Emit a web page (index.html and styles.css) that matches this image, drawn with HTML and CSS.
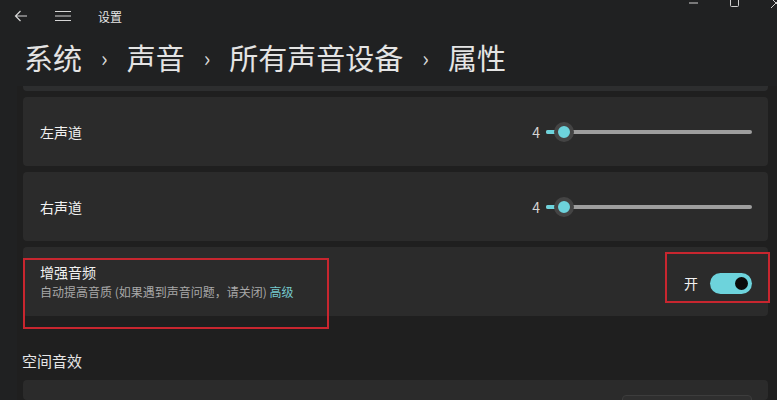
FILE: index.html
```html
<!DOCTYPE html>
<html lang="zh-CN">
<head>
    <meta charset="UTF-8">
    <meta name="viewport" content="width=device-width, initial-scale=1.0">
    <title>设置</title>
    <link rel="stylesheet" href="styles.css">
</head>
<body>
    <header class="titlebar">
        <span class="nav-icon back">
            <svg width="14" height="12" viewBox="0 0 14 12" fill="none" stroke="#d6d6d6" stroke-width="1.2">
                <path d="M13 6H1.5M6.5 1L1.5 6l5 5"/>
            </svg>
        </span>
        <span class="nav-icon menu">
            <svg width="16" height="12" viewBox="0 0 16 12" fill="none" stroke="#d6d6d6" stroke-width="1.2">
                <path d="M0 1.5h16M0 6h16M0 10.5h16"/>
            </svg>
        </span>
        <span class="app-title">设置</span>
        <div class="window-controls">
            <svg width="10" height="10" viewBox="0 0 10 10" fill="none" stroke="#d0d0d0" stroke-width="1"><path d="M0 5h9"/></svg>
            <svg width="10" height="10" viewBox="0 0 10 10" fill="none" stroke="#d0d0d0" stroke-width="1"><rect x="0.5" y="0.5" width="8" height="8" rx="1"/></svg>
            <svg width="10" height="10" viewBox="0 0 10 10" fill="none" stroke="#d0d0d0" stroke-width="1"><path d="M0 0l10 10M10 0L0 10"/></svg>
        </div>
    </header>

    <nav class="breadcrumb">
        <span>系统</span><span class="sep">›</span>
        <span>声音</span><span class="sep">›</span>
        <span>所有声音设备</span><span class="sep">›</span>
        <span>属性</span>
    </nav>

    <main class="content">
        <div class="card partial"></div>

        <div class="card">
            <span class="card-title">左声道</span>
            <div class="slider">
                <span class="slider-value">4</span>
                <div class="track">
                    <div class="fill"></div>
                    <div class="thumb"></div>
                </div>
            </div>
        </div>

        <div class="card">
            <span class="card-title">右声道</span>
            <div class="slider">
                <span class="slider-value">4</span>
                <div class="track">
                    <div class="fill"></div>
                    <div class="thumb"></div>
                </div>
            </div>
        </div>

        <div class="card enhance">
            <div class="card-text">
                <span class="card-title">增强音频</span>
                <span class="card-desc">自动提高音质 (如果遇到声音问题，请关闭) <a class="link">高级</a></span>
            </div>
            <div class="toggle-wrap">
                <span class="toggle-label">开</span>
                <span class="toggle"><span class="knob"></span></span>
            </div>
            <!-- annotation boxes -->
            <div class="mark mark-text"></div>
            <div class="mark mark-toggle"></div>
        </div>

        <h2 class="section-title">空间音效</h2>

        <div class="card last">
            <span class="dropdown"></span>
        </div>
    </main>
</body>
</html>
```

FILE: styles.css
```css
:root {
    --bg: #202122;
    --content-bg: #1f1f1f;
    --card: #2b2b2b;
    --text: #f2f2f2;
    --muted: #a8a8a8;
    --accent: #6dd3dc;
    --link: #76c9cd;
    --mark: #c8262f;
}

body {
    margin: 0;
    width: 777px;
    height: 400px;
    overflow: hidden;
    background-color: var(--bg);
    color: var(--text);
    font-family: "Noto Sans CJK SC", "Noto Sans", sans-serif;
}

.titlebar {
    display: flex;
    align-items: center;
    height: 32px;
    padding-left: 14px;
}

.nav-icon {
    display: flex;
    align-items: center;
}

.nav-icon.back {
    margin-right: 27px;
}

.nav-icon.menu {
    margin-right: 27px;
}

.app-title {
    font-size: 12px;
    color: #e6e6e6;
}

.window-controls {
    display: flex;
    align-self: flex-start;
    gap: 31px;
    margin-left: auto;
    margin-top: -2px;
    margin-right: -4px;
}

.breadcrumb {
    display: flex;
    align-items: center;
    height: 50px;
    padding-left: 24px;
    font-size: 29px;
    color: #e4e4e4;
}

.breadcrumb .sep {
    font-size: 22px;
    margin: 0 19px 0 19px;
    color: #d8d8d8;
}

.content {
    display: flex;
    flex-direction: column;
    gap: 6px;
    margin-left: 17px;
    margin-top: 4px;
    padding: 0 9px 0 6px;
    background-color: var(--content-bg);
    height: 314px;
    overflow: hidden;
}

.card {
    position: relative;
    display: flex;
    align-items: center;
    justify-content: space-between;
    flex-shrink: 0;
    height: 69px;
    padding: 0 16px 0 17px;
    background-color: var(--card);
    border-radius: 4px;
}

.card.partial {
    height: 5px;
    border-radius: 0 0 4px 4px;
    background-color: #2d2e2f;
}

.card-title {
    font-size: 14px;
    color: var(--text);
}

.card-text {
    display: flex;
    flex-direction: column;
    gap: 1px;
    margin-top: -2px;
}

.card-desc {
    font-size: 12px;
    color: var(--muted);
}

.link {
    color: var(--link);
}

/* slider */
.slider {
    display: flex;
    align-items: center;
    gap: 6px;
}

.slider-value {
    font-size: 14px;
    color: #d4d4d4;
}

.track {
    position: relative;
    width: 206px;
    height: 4px;
    border-radius: 2px;
    background-color: #9e9e9e;
}

.fill {
    width: 18px;
    height: 100%;
    border-radius: 2px;
    background-color: var(--accent);
}

.thumb {
    position: absolute;
    left: 8px;
    top: -8px;
    width: 12px;
    height: 12px;
    border: 4px solid #444;
    border-radius: 50%;
    background-color: var(--accent);
}

/* toggle */
.toggle-wrap {
    display: flex;
    align-items: center;
    gap: 12px;
    margin-top: 3px;
}

.toggle-label {
    font-size: 14px;
    color: var(--text);
}

.toggle {
    display: flex;
    align-items: center;
    justify-content: flex-end;
    width: 42px;
    height: 21px;
    padding-right: 4px;
    box-sizing: border-box;
    border-radius: 11px;
    background-color: var(--accent);
}

.knob {
    width: 13px;
    height: 13px;
    border-radius: 50%;
    background-color: #0a0a0a;
}

/* red annotation boxes */
.mark {
    position: absolute;
    border: 2px solid var(--mark);
}

.mark-text {
    left: 0;
    top: 11px;
    width: 302px;
    height: 67px;
}

.mark-toggle {
    right: -2px;
    top: 5px;
    width: 101px;
    height: 47px;
}

.section-title {
    margin: 27px 0 1px -1px;
    height: 24px;
    line-height: 24px;
    font-size: 15px;
    font-weight: 400;
    color: #e6e6e6;
}

.card.last {
    height: 20px;
    overflow: hidden;
    align-items: flex-start;
    justify-content: flex-end;
}

.dropdown {
    margin-top: 15px;
    width: 128px;
    height: 30px;
    border: 1px solid #3d3d3d;
    border-radius: 4px;
    background-color: #2f2f2f;
}
```
